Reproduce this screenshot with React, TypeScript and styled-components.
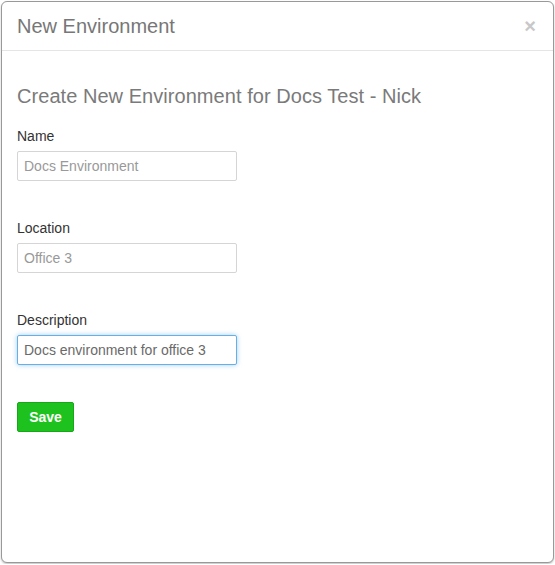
import styled, {createGlobalStyle} from "styled-components";

const GlobalStyle = createGlobalStyle`
  html, body {
    margin: 0;
    padding: 0;
    background: #fff;
    font-family: "Liberation Sans", Arial, sans-serif;
  }
`;

const Page = styled.div`
  padding: 1px;
`;

const Modal = styled.div`
  width: 553px;
  height: 562px;
  box-sizing: border-box;
  border: 1px solid #999;
  border-radius: 6px;
  background: #fff;
  box-shadow: 0 1px 2px rgba(0, 0, 0, 0.25);
  display: flex;
  flex-direction: column;
`;

const Header = styled.div`
  height: 49px;
  box-sizing: border-box;
  padding: 0 15px;
  border-bottom: 1px solid #e5e5e5;
  display: flex;
  align-items: center;
  justify-content: space-between;
`;

const Title = styled.h4`
  margin: 0;
  font-size: 20px;
  font-weight: normal;
  color: #777;
`;

const Close = styled.button`
  border: 0;
  background: none;
  padding: 0;
  margin-right: 2px;
  font-family: "Liberation Sans", Arial, sans-serif;
  font-size: 20px;
  font-weight: bold;
  line-height: 1;
  color: #c8c8c8;
  cursor: pointer;
`;

const Body = styled.div`
  padding: 15px;
  display: flex;
  flex-direction: column;
`;

const Heading = styled.h3`
  margin: 19px 0 19px;
  font-size: 20px;
  line-height: 22px;
  font-weight: normal;
  color: #7a7a7a;
  letter-spacing: 0.05px;
`;

const Group = styled.div`
  display: flex;
  flex-direction: column;
  margin-bottom: 37px;
`;

const Label = styled.label`
  font-size: 14px;
  line-height: 20px;
  color: #333;
  margin-bottom: 5px;
`;

const Input = styled.input<{$focused?: boolean}>`
  width: 220px;
  height: 30px;
  box-sizing: border-box;
  padding: 4px 6px;
  font-family: "Liberation Sans", Arial, sans-serif;
  font-size: 14px;
  color: #6a6a6a;
  border: 1px solid ${p => (p.$focused ? "#66afe9" : "#d5d5d5")};
  border-radius: 2px;
  outline: none;
  box-shadow: ${p => (p.$focused ? "0 0 5px rgba(102, 175, 233, 0.6)" : "none")};
  &::placeholder {
    color: #999;
  }
`;

const SaveButton = styled.button`
  width: 57px;
  height: 30px;
  padding: 0;
  font-family: "Liberation Sans", Arial, sans-serif;
  font-size: 14px;
  font-weight: bold;
  color: #fff;
  background: #1ec21e;
  border: 1px solid #17a817;
  border-radius: 2px;
  cursor: pointer;
`;

export default function App() {
  return (
    <Page>
      <GlobalStyle/>
      <Modal>
        <Header>
          <Title>New Environment</Title>
          <Close>×</Close>
        </Header>
        <Body>
          <Heading>Create New Environment for Docs Test - Nick</Heading>
          <Group>
            <Label>Name</Label>
            <Input placeholder="Docs Environment"/>
          </Group>
          <Group>
            <Label>Location</Label>
            <Input placeholder="Office 3"/>
          </Group>
          <Group>
            <Label>Description</Label>
            <Input $focused defaultValue="Docs environment for office 3"/>
          </Group>
          <div>
            <SaveButton>Save</SaveButton>
          </div>
        </Body>
      </Modal>
    </Page>
  );
}
